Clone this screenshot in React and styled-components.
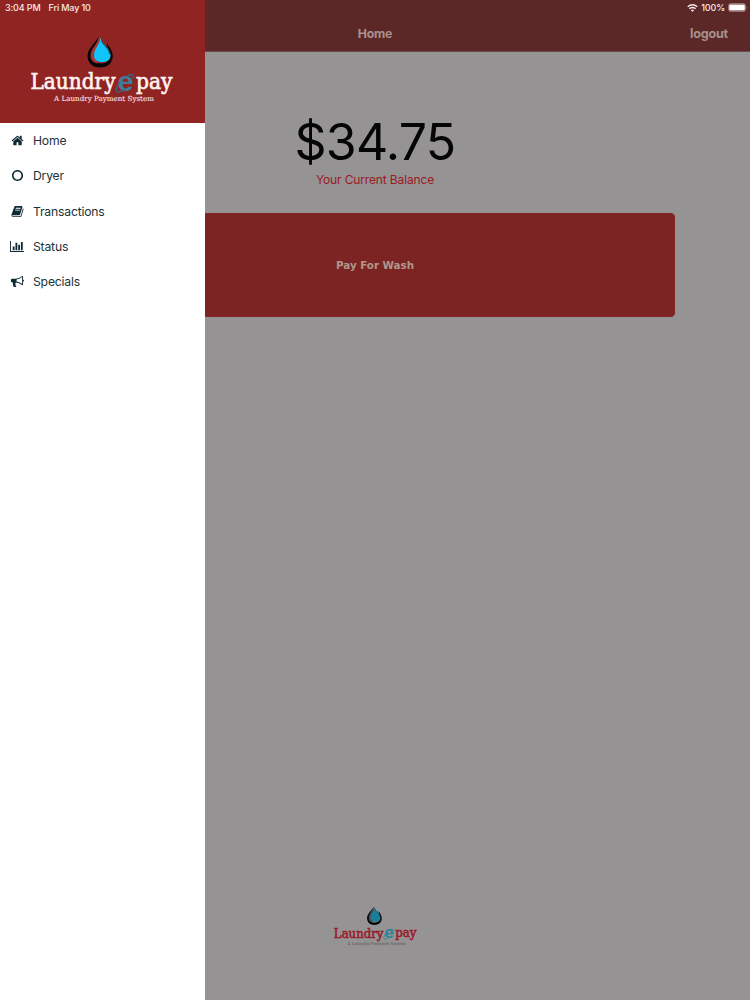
import React from "react";
import styled, { createGlobalStyle } from "styled-components";

const GlobalStyle = createGlobalStyle`
  * { box-sizing: border-box; }
  body { margin: 0; background: #959394; font-family: Inter, "Liberation Sans", sans-serif; }
`;

const Screen = styled.div`
  position: relative;
  display: flex;
  flex-direction: column;
  height: 1000px;
  overflow: hidden;
  background: #959394;
`;

const TopBar = styled.header`
  display: grid;
  grid-template-columns: 1fr auto 1fr;
  align-items: center;
  height: 52px;
  padding: 17px 22px 0;
  background: #5c2727;
  border-bottom: 1px solid #6f4a4a;
  color: #a8918c;
  font-weight: 700;
`;

const PageTitle = styled.h1`
  grid-column: 2;
  margin: 0;
  font-size: 12.3px;
  font-weight: 700;
  line-height: 18px;
  letter-spacing: -0.22px;
`;

const Logout = styled.span`
  justify-self: end;
  font-size: 12.6px;
  line-height: 18px;
  letter-spacing: -0.22px;
`;

const Main = styled.main`
  flex: 1;
  display: flex;
  flex-direction: column;
  align-items: center;
  padding: 60px 75px 53px;
`;

const Amount = styled.div`
  font-size: 50px;
  line-height: 60px;
  letter-spacing: -0.75px;
  color: #050506;
  white-space: nowrap;
`;

const BalanceLabel = styled.div`
  font-size: 12.1px;
  line-height: 16px;
  letter-spacing: -0.18px;
  color: #9c1a22;
`;

const PayButton = styled.button`
  width: 600px;
  height: 104px;
  margin: 25px 0 auto;
  padding: 0;
  border: 1px solid #842525;
  border-radius: 4px;
  background: #7c2423;
  color: #b1978b;
  font: bold 10.3px "DejaVu Sans", sans-serif;
`;

const Drawer = styled.aside`
  position: absolute;
  top: 0;
  left: 0;
  width: 205px;
  height: 100%;
  background: #fff;
`;

const DrawerHeader = styled.div`
  display: flex;
  justify-content: center;
  height: 123px;
  padding: 35px 2px 0 0;
  background: #902423;
`;

const Menu = styled.nav`
  display: flex;
  flex-direction: column;
  padding-top: 0.3px;
`;

const MenuItem = styled.a`
  display: flex;
  align-items: center;
  height: 35.1px;
  padding-left: 9.5px;
  gap: 8.5px;
  color: #1c3338;
  font-size: 12.2px;
  letter-spacing: -0.2px;
`;

const IconSlot = styled.span`
  display: flex;
  justify-content: center;
  width: 15px;
  color: #0d2b33;
`;

const IconSvg = styled.svg`
  flex: none;
  fill: currentColor;
`;

const StatusBar = styled.div`
  position: absolute;
  top: 0;
  left: 0;
  right: 0;
  display: flex;
  align-items: center;
  height: 15px;
  padding: 0 2px 0 5px;
  color: #f6eaea;
  font-size: 9px;
  font-weight: 500;
  letter-spacing: -0.14px;
`;

const StatusDate = styled.span`
  margin-left: 8px;
`;

const StatusRight = styled.div`
  display: flex;
  align-items: center;
  gap: 3px;
  margin-left: auto;
`;

const icons = {
  home: { w: 13, box: "0 0 1792 1792", d: "M1472 992v480q0 26-19 45t-45 19h-384v-384h-256v384h-384q-26 0-45-19t-19-45v-480q0-1 .5-3t.5-3l575-474 575 474q1 2 1 6zm223-69l-62 74q-8 9-21 11h-3q-13 0-21-7l-692-577-692 577q-12 8-24 7-13-2-21-11l-62-74q-8-10-7-23.5t11-21.5l719-599q32-26 76-26t76 26l244 204v-195q0-14 9-23t23-9h192q14 0 23 9t9 23v408l219 182q10 8 11 21.5t-7 23.5z" },
  circle: { w: 13, box: "0 0 1792 1792", d: "M896 352q-148 0-273 73t-198 198-73 273 73 273 198 198 273 73 273-73 198-198 73-273-73-273-198-198-273-73zm768 544q0 209-103 385.5t-279.500 279.500-385.500 103-385.500-103-279.500-279.500-103-385.500 103-385.500 279.500-279.500 385.500-103 385.500 103 279.500 279.500 103 385.500z" },
  book: { w: 13, box: "0 0 1792 1792", d: "M1703 478q40 57 18 129l-275 906q-19 64-76.5 107.5t-122.5 43.5h-923q-77 0-148.5-53.5t-99.5-131.5q-24-67-2-127 0-4 3-27t4-37q1-8-3-21.5t-3-19.5q2-11 8-21t16.5-23.5 16.5-23.5q23-38 45-91.5t30-91.5q3-10 .5-30t-.5-28q3-11 17-28t17-23q21-36 42-92t25-90q1-9-2.5-32t.5-28q4-13 22-30.5t22-22.5q19-26 42.500-84.500t27.500-96.500q1-8-3-25.500t-2-26.500q2-8 9-18t18-23 17-21q8-12 16.500-30.500t15-35 16-36 19.500-32 26.500-23.500 36-11.500 47.500 5.500l-1 3q38-9 51-9h761q74 0 114 56t18 130l-274 906q-36 119-71.500 153.500t-128.500 34.500h-869q-27 0-38 15-11 16-1 43 24 70 144 70h923q29 0 56-15.500t35-41.500l300-987q7-22 5-57 38 15 59 43zm-1064 2q-4 13 2 22.500t20 9.500h608q13 0 25.500-9.500t16.500-22.500l21-64q4-13-2-22.500t-20-9.500h-608q-13 0-25.500 9.500t-16.500 22.500zm-83 256q-4 13 2 22.500t20 9.500h608q13 0 25.500-9.500t16.500-22.500l21-64q4-13-2-22.500t-20-9.500h-608q-13 0-25.500 9.500t-16.500 22.500z" },
  chart: { w: 14.6, box: "0 0 2048 1792", d: "M640 896v512h-256v-512h256zm384-512v1024h-256v-1024h256zm1024 1152v128h-2048v-1536h128v1408h1920zm-640-896v768h-256v-768h256zm384-384v1152h-256v-1152h256z" },
  horn: { w: 13, box: "0 0 1792 1792", d: "M1664 640q53 0 90.5 37.5t37.5 90.5-37.5 90.5-90.5 37.5v384q0 52-38 90t-90 38q-417-347-812-380-58 19-91 66t-31 100.5 40 92.5q-20 33-23 65.5t6 58 33.5 55 48 50 61.5 50.5q-29 58-111.5 83t-168.5 11.5-132-55.5q-7-23-29.500-87.500t-32-94.500-23-89-15-101 3.500-98.500 22-110.500h-122q-66 0-113-47t-47-113v-192q0-66 47-113t113-47h480q435 0 896-384 52 0 90 38t38 90v384zm-128 604v-954q-394 302-768 343v270q377 42 768 341z" },
};

const menu = [
  ["home", "Home"],
  ["circle", "Dryer"],
  ["book", "Transactions"],
  ["chart", "Status"],
  ["horn", "Specials"],
];

function MenuIcon({ name }) {
  const { w, box, d } = icons[name];
  return (
    <IconSvg width={w} height="13" viewBox={box}>
      <path d={d} />
    </IconSvg>
  );
}

const LogoSvg = styled.svg`
  display: block;
  flex: none;
  font-family: "DejaVu Serif Condensed", "DejaVu Serif", serif;
  letter-spacing: 0;
`;

const BrandE = styled.text`
  font-family: "Liberation Sans", sans-serif;
  font-size: 27px;
  font-weight: bold;
`;

function Logo({ width, word, tagline, blue, e, orbit, shade, weight }) {
  return (
    <LogoSvg width={width} height={(width * 70) / 146} viewBox="0 0 146 70">
      <path d="M70 1C67 8 58.500 13 58.500 21C58.500 28 64 32.500 71 32.500C78.500 32.500 83.800 28 83.800 21C83.800 17 81 12 77.500 8C79 14 82 18 81 22C80 27 76 28.500 71 28.500C66 28.500 62 25.500 62 20.500C62 13 69 9 70 1Z" fill="#080607" />
      <path d="M70 2C69 9 61.500 13 61.500 21C61.500 25 64.500 27.500 68 28.500L72 22L72 3Z" fill={shade} />
      <path d="M71.500 3C70.500 10 65 14 65 20C65 25 68 27 73 27C78.500 27 81.500 24.500 81.500 20C81.500 14 74 10 71.500 3Z" fill={blue} />
      <path d="M72.500 5.500C74 10.500 80 13 80.500 19" fill="none" stroke="#14303c" strokeWidth="0.900" />
      <g fill={word} fontSize="23" stroke={word} strokeWidth={weight}>
        <text x="1.500" y="54.300" textLength="85" lengthAdjust="spacingAndGlyphs">Laundry</text>
        <text x="107" y="53.500" textLength="36.500" lengthAdjust="spacingAndGlyphs">pay</text>
      </g>
      <BrandE x="88.500" y="55.500" fill={e} textLength="16" lengthAdjust="spacingAndGlyphs">e</BrandE>
      <path d="M98 41C103 38.500 105.500 40 103.500 43.500M91 47C87 52 86 56.500 89 57C91 57.200 93.500 56 96 54" fill="none" stroke={orbit} strokeWidth="1.300" />
      <text x="25" y="66.300" fill={tagline} fontSize="7" stroke={tagline} strokeWidth="0.150" textLength="100" lengthAdjust="spacingAndGlyphs">A Laundry Payment System</text>
    </LogoSvg>
  );
}

export default function App() {
  return (
    <Screen>
      <GlobalStyle />
      <TopBar>
        <PageTitle>Home</PageTitle>
        <Logout>logout</Logout>
      </TopBar>
      <Main>
        <Amount>$34.75</Amount>
        <BalanceLabel>Your Current Balance</BalanceLabel>
        <PayButton>Pay For Wash</PayButton>
        <Logo width={85} word="#981d2b" tagline="#69666a" blue="#167f9b" e="#2b8496" orbit="#2b8496" shade="#45515a" weight="1" />
      </Main>
      <Drawer>
        <DrawerHeader>
          <Logo width={146} word="#fff3ef" tagline="#f4dfdc" blue="#0fc5fb" e="#427c98" orbit="#3d6680" shade="#a73532" weight="0.6" />
        </DrawerHeader>
        <Menu>
          {menu.map(([icon, label]) => (
            <MenuItem key={label}>
              <IconSlot><MenuIcon name={icon} /></IconSlot>
              {label}
            </MenuItem>
          ))}
        </Menu>
      </Drawer>
      <StatusBar>
        <span>3:04 PM</span>
        <StatusDate>Fri May 10</StatusDate>
        <StatusRight>
          <svg width="11" height="8" viewBox="0 0 11 8" fill="none" stroke="currentColor" strokeWidth="1.400">
            <path d="M0.700 2.800Q5.500-1.200 10.300 2.800M2.400 4.700Q5.500 2.200 8.600 4.700" />
            <path d="M3.900 6.100Q5.500 4.900 7.100 6.100L5.500 7.900Z" fill="currentColor" stroke="none" />
          </svg>
          <span>100%</span>
          <svg width="20" height="9" viewBox="0 0 20 9">
            <rect x="0.500" y="0.500" width="17" height="8" rx="2" fill="none" stroke="#a98483" strokeWidth="0.800" />
            <rect x="1.200" y="1.400" width="15.600" height="6.200" rx="1" fill="#fff" />
            <path d="M18.500 3Q20 4.500 18.500 6Z" fill="#a98483" />
          </svg>
        </StatusRight>
      </StatusBar>
    </Screen>
  );
}
